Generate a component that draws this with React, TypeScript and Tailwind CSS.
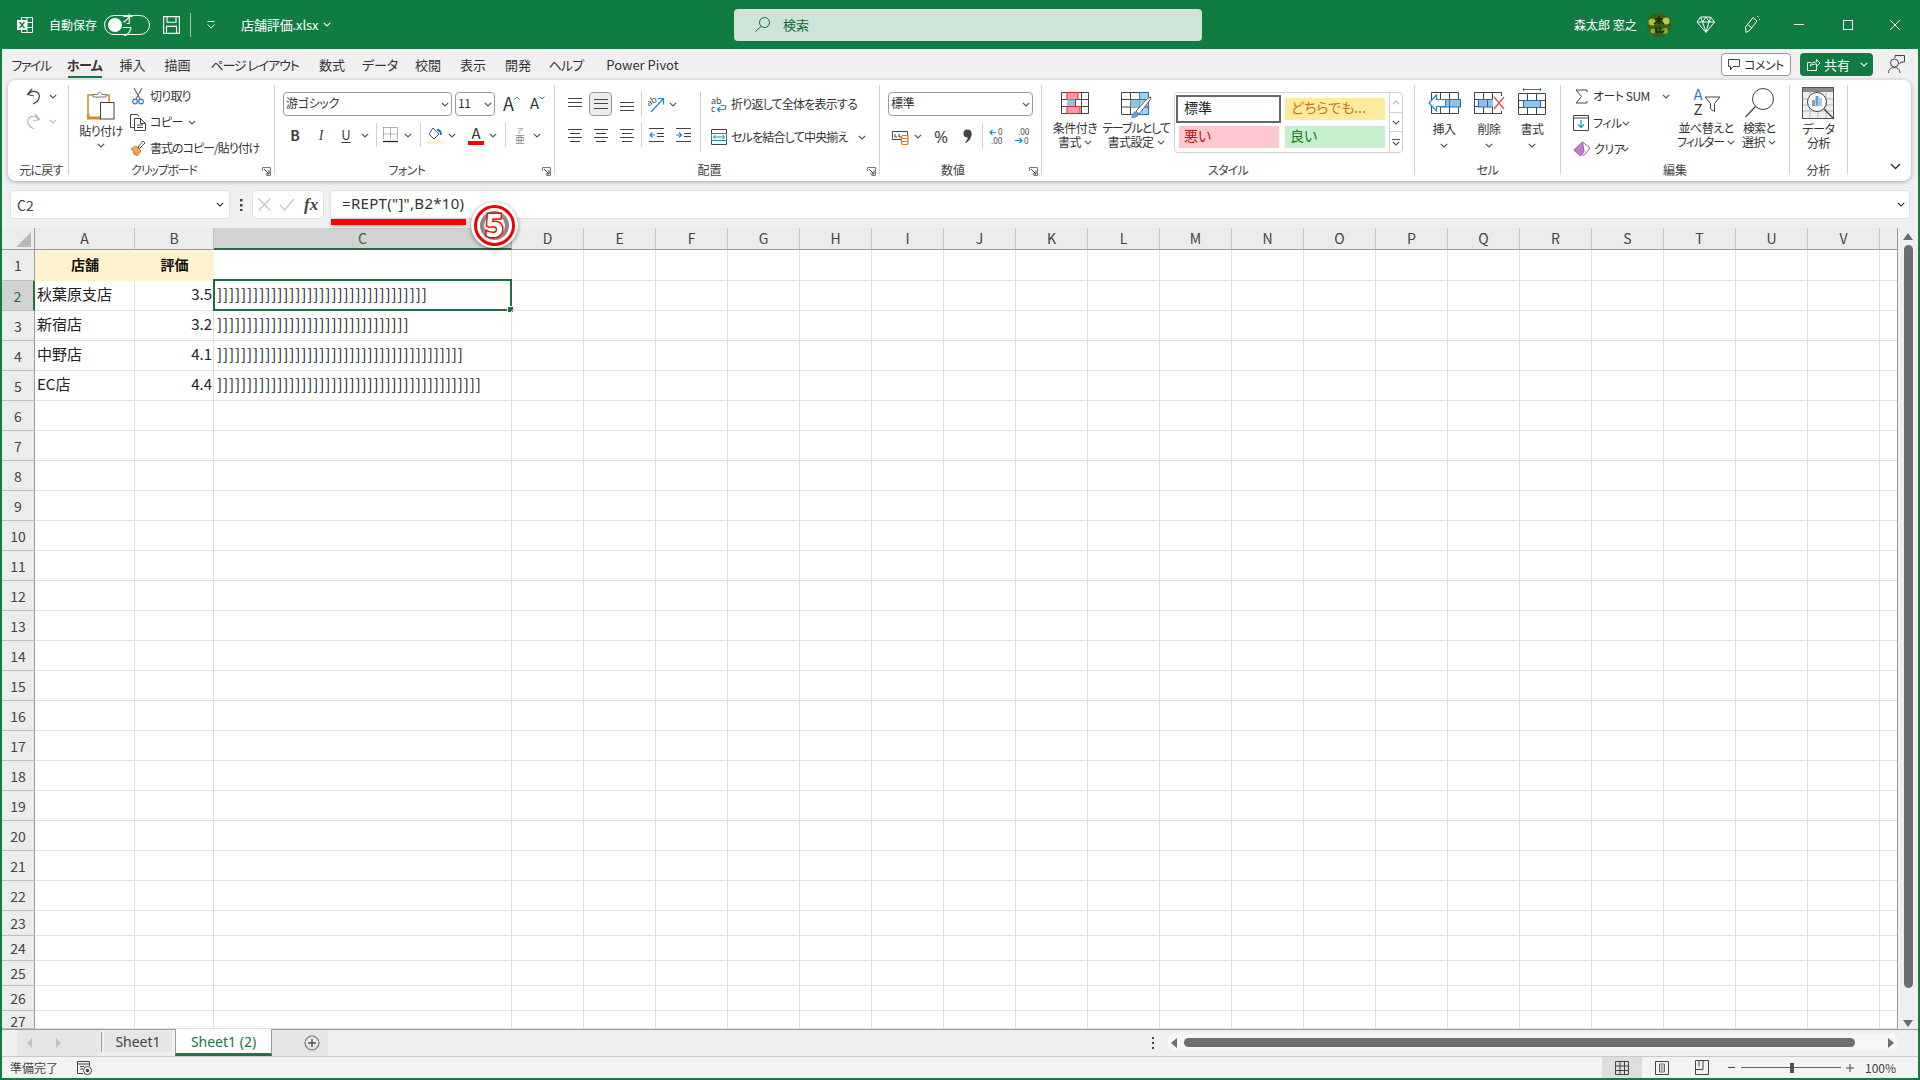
import React from "react";

const Chev = ({ c = "#555" }: { c?: string }) => (
  <svg width="8" height="5" viewBox="0 0 8 5" fill="none" className="block shrink-0"><path d="M.8.8 4 4 7.2.8" stroke={c} strokeWidth="1.2" /></svg>
);
const S = ({ w, h, children, className = "" }: { w: number; h: number; children: React.ReactNode; className?: string }) => (
  <svg width={w} height={h} viewBox={`0 0 ${w} ${h}`} fill="none" className={`block shrink-0 ${className}`}>{children}</svg>
);
const Sep = ({ className = "" }: { className?: string }) => <div className={`w-px h-[24px] bg-[#d0d0d0] shrink-0 ${className}`} />;
const T = ({ children, className = "" }: { children: React.ReactNode; className?: string }) => (
  <span className={`whitespace-nowrap text-[12px] text-[#333] ${className.includes("tracking") ? "" : "tracking-[-0.5px]"} ${className.includes("leading") ? "" : "leading-[16px]"} ${className}`}>{children}</span>
);

const Launcher = () => (
  <S w={9} h={9}><path d="M.5 4V.5h8v8H4.500" stroke="#777" /><path d="M2 2l5 5M7 3.500V7H3.500" stroke="#444" /></S>
);

function Group({ w, label, lblClass = "", launcher = false, children }: { w: string; label: string; lblClass?: string; launcher?: boolean; children: React.ReactNode }) {
  return (
    <div className={`${w} h-[90px] flex flex-col border-r border-[#d0d0d0] relative shrink-0`}>
      <div className="flex-1 min-h-0 flex">{children}</div>
      <div className={`h-[16px] -mb-[3px] text-center text-[12px] leading-[16px] text-[#444] whitespace-nowrap ${launcher ? "pr-[15px]" : ""} ${lblClass}`}>{label}</div>
      {launcher && <div className="absolute right-[3px] -bottom-[1px]"><Launcher /></div>}
    </div>
  );
}

const Lines = ({ ys, left = 0, w = 14, alt = false }: { ys: number[]; left?: number; w?: number; alt?: boolean }) => (
  <S w={14} h={14}>{ys.map((y, i) => <path key={i} d={`M${left + (alt && i % 2 ? 2 : 0)} ${y + .5}h${w - (alt && i % 2 ? 4 : 0)}`} stroke="#444" />)}</S>
);

const ExcelIcon = () => (
  <S w={16} h={16}>
    <path d="M4.500.5h11v15h-11z" stroke="#fff" /><path d="M10 .5v15M4.500 5.500h11M4.500 10.500h11" stroke="#fff" />
    <rect x="0" y="3" width="10" height="10" fill="#fff" /><path d="M2.500 5l5 6M7.500 5l-5 6" stroke="#107c41" strokeWidth="1.300" />
  </S>
);
const SaveIcon = () => (
  <S w={17} h={18}><path d="M.6.6h15.800v16.800H.6z" stroke="#fff" strokeWidth="1.100" /><path d="M4 .6v5.600h9V.6M3.500 17.400v-7h10v7" stroke="#fff" strokeWidth="1.100" /></S>
);
const Avatar = () => (
  <S w={24} h={24}>
    <circle cx="12" cy="12" r="12" fill="#3d5f14" /><circle cx="5" cy="9" r="3.500" fill="#a5c244" /><circle cx="19" cy="8" r="3.500" fill="#b6cf4a" /><circle cx="18" cy="18" r="3" fill="#8eaa3a" /><circle cx="6" cy="18" r="2.500" fill="#8eaa3a" />
    <path d="M8 6h8M12 3v8M7 11l4-3M17 11l-4-3M9 14v5h7l1-2M12 14l2 2" stroke="#14280a" strokeWidth="1.500" />
  </S>
);

const Undo = ({ c }: { c: string }) => (
  <S w={15} h={17}><path d="M6 1 1.500 6.500 8 8" stroke={c} strokeWidth="1.200" /><path d="M2 6.300C5 3 9 2.500 11.500 4.500 15 7.500 13.500 13 7 16" stroke={c} strokeWidth="1.200" /></S>
);
const Redo = ({ c }: { c: string }) => (
  <S w={15} h={17}><path d="M9 1l4.500 5.500L7 8" stroke={c} strokeWidth="1.200" /><path d="M13 6.300C10 3 6 2.500 3.500 4.500 0 7.500 1.500 13 8 16" stroke={c} strokeWidth="1.200" /></S>
);
const Paste = () => (
  <S w={28} h={30}>
    <path d="M1 5h21v23H1z" fill="#fff" stroke="#e08a1e" strokeWidth="1.600" /><path d="M1 24v4h13" stroke="#e08a1e" strokeWidth="3" />
    <path d="M6 7V4.500h4.500c0-3 4-3 4.500 0H19V7z" fill="#fff" stroke="#777" />
    <rect x="13.500" y="12.500" width="13.500" height="16.500" fill="#fff" stroke="#444" />
  </S>
);
const Cut = () => (
  <S w={12} h={17}><path d="M2 0l6 11M10 0L4 11" stroke="#666" strokeWidth="1.100" /><circle cx="3" cy="13.500" r="2.300" stroke="#2b7cd3" strokeWidth="1.200" /><circle cx="9" cy="13.500" r="2.300" stroke="#2b7cd3" strokeWidth="1.200" /></S>
);
const Copy = () => (
  <S w={16} h={17}><path d="M4 13.500H.5V.5h7L9 3" stroke="#444" /><path d="M4.500 4.500h6l5 5v7h-11z" fill="#fff" stroke="#444" /><path d="M10.500 4.500v5h5M7 11h6M7 13.500h6" stroke="#444" /></S>
);
const Painter = () => (
  <S w={16} h={16}><path d="M1 9l5-3 5 5-4 5c-1-1-1-2-1-2l-2 1 1-2-2-.5 1-1.500z" fill="#f2a65a" stroke="#d9761c" /><path d="M8 7l5-6 2 2-5.500 5.500z" fill="#fff" stroke="#555" /></S>
);
const Borders = () => (
  <S w={15} h={16}><path d="M.5.500h14M14.500.500v11M.5 .5v11M7.500.5v11M.5 7h14" stroke="#666" strokeDasharray="1 1" /><path d="M0 14.500h15" stroke="#222" strokeWidth="1.300" /></S>
);
const Fill = () => (
  <S w={17} h={17}><path d="M6 1l6 6-5 5-5-5z" fill="#fff" stroke="#555" /><path d="M10 3c3 0 4 2 4 5" stroke="#1a6fc0" strokeWidth="1.800" /><rect y="13.500" width="17" height="3.500" fill="#fff2cc" /></S>
);
const Orient = () => (
  <S w={17} h={17}>
    <text x="0" y="9" fontSize="9" fill="#444" transform="rotate(-30 3 9)" fontFamily="Noto Sans">ab</text>
    <path d="M3 16L15 3M9.500 2.500H15.500V8.500" stroke="#1e8bcd" strokeWidth="1.200" />
  </S>
);
const Indent = ({ dir }: { dir: number }) => (
  <S w={15} h={14}>
    <path d="M0 .5h15M0 13.500h15" stroke="#444" /><path d="M8 5.500h7M8 8.500h7" stroke="#444" />
    {dir < 0 ? <path d="M6 7H.8M3.500 4.500L1 7l2.500 2.500" stroke="#1e8bcd" strokeWidth="1.200" /> : <path d="M0 7h5.500M3 4.500L5.500 7 3 9.500" stroke="#1e8bcd" strokeWidth="1.200" />}
  </S>
);
const Wrap = () => (
  <S w={16} h={17}>
    <text x="0" y="8" fontSize="9" fill="#444" fontFamily="Noto Sans">ab</text><text x="0" y="16" fontSize="9" fill="#444" fontFamily="Noto Sans">c</text>
    <path d="M10 9.500h3.500c2 0 2 4-.5 4H7M9 11l-2.500 2.500L9 16" stroke="#1e8bcd" strokeWidth="1.200" />
  </S>
);
const Merge = () => (
  <S w={16} h={16}><path d="M.5.5h15v15H.5zM.5 4.500h15M.5 11.500h15" stroke="#444" /><path d="M.5 4.500h15v7H.5z" fill="#fff" stroke="#1e8bcd" /><path d="M2.500 8h11M4.500 6l-2 2 2 2M11.500 6l2 2-2 2" stroke="#1e8bcd" /></S>
);
const Accounting = () => (
  <S w={17} h={17}><path d="M.5 3.500h15v8H.5z" stroke="#444" /><path d="M3 6v3h2M7 6v3h2" stroke="#444" /><rect x="9.500" y="7.500" width="6.500" height="9" rx="1.500" fill="#fff" stroke="#e07a1e" strokeWidth="1.200" /><path d="M9.500 10.500h6.500M9.500 13.500h6.500" stroke="#e07a1e" /></S>
);
const Comma = () => (
  <S w={9} h={15}><circle cx="4.500" cy="4.500" r="4" fill="#444" /><path d="M8.500 4.500C8.500 9 6 13 1.500 14.500 4 11.500 5 9.500 5 7z" fill="#444" /></S>
);
const Dec = ({ inc }: { inc: boolean }) => (
  <S w={16} h={17}>
    {inc ? <>
      <path d="M7 4.500H1M3.500 2L1 4.500 3.500 7" stroke="#1e8bcd" strokeWidth="1.200" />
      <text x="9" y="7" fontSize="8" fill="#444" fontFamily="Noto Sans">0</text>
      <text x="2" y="16" fontSize="8" fill="#444" fontFamily="Noto Sans">.00</text>
    </> : <>
      <text x="3" y="7" fontSize="8" fill="#444" fontFamily="Noto Sans">.00</text>
      <path d="M0 12.500h7M4.500 10L7 12.500 4.500 15" stroke="#1e8bcd" strokeWidth="1.200" />
      <text x="9" y="16" fontSize="8" fill="#444" fontFamily="Noto Sans">0</text>
    </>}
  </S>
);
const Cond = () => (
  <S w={28} h={22}>
    <path d="M.5.5h27v21H.5zM.5 7.500h27M.5 14.500h27M6.500.5v21M14.500.5v21M20.500.5v21" stroke="#444" />
    <rect x="6" y="0.500" width="11" height="7" fill="#ff9ca8" stroke="#d92b2b" /><rect x="6" y="7.500" width="8" height="7" fill="#8fc3ea" /><rect x="6" y="14.500" width="13" height="7" fill="#ff9ca8" stroke="#d92b2b" />
  </S>
);
const TableIc = () => (
  <S w={31} h={27}>
    <path d="M.5.5h27v22H.5zM.5 7.500h27M.5 15h27M9.500.5v22M18.500.5v22" stroke="#444" />
    <rect x="9.500" y="7.500" width="9" height="7.500" fill="#8fc3ea" /><rect x="18.500" y=".5" width="9" height="22" fill="#8fc3ea" opacity=".8" /><path d="M18.500.5h9M18.500 7.500h9M18.500 15h9M18.500 22.500h9M27.500.5v22M9.500 7.500h9" stroke="#1e6fb8" />
    <path d="M15 19L27 6l3-1-1 3-11 14z" fill="#fff" stroke="#666" /><path d="M10 26c1-1 1-5 4-7l4 3c-1 4-5 4-8 4z" fill="#5a9bd5" />
  </S>
);
const GridIc = ({ x = 0, y = 0, w = 28, h = 22 }: { x?: number; y?: number; w?: number; h?: number }) => (
  <path d={`M${x + .5} ${y + .5}h${w - 1}v${h - 1}h-${w - 1}zM${x + .5} ${y + 7.5}h${w - 1}M${x + .5} ${y + 14.5}h${w - 1}M${x + 9.5} ${y + .5}v7M${x + 18.5} ${y + .5}v7M${x + 9.5} ${y + 14.500}v7M${x + 18.5} ${y + 14.500}v7`} stroke="#444" />
);
const InsertIc = () => (
  <S w={33} h={23}><GridIc x={3} y={0} /><rect x="12" y="7.500" width="20.500" height="7.500" fill="#8fc3ea" stroke="#1e6fb8" /><path d="M21.500 7.500V15" stroke="#1e6fb8" /><path d="M8.500 3L1 11l7.500 8v-4.500h9v-7h-9z" fill="#fff" stroke="#1e8bcd" strokeWidth="1.200" /></S>
);
const DeleteIc = () => (
  <S w={31} h={23}><GridIc x={0} y={0} /><rect x="4.500" y="7.500" width="17" height="7.500" fill="#8fc3ea" stroke="#1e6fb8" /><path d="M13.500 7.500V15" stroke="#1e6fb8" /><rect x="19" y="4" width="12" height="15" fill="#fff" /><path d="M20 5l10 12M30 5L20 17" stroke="#ea4c4c" strokeWidth="1.300" /></S>
);
const FormatIc = () => (
  <S w={28} h={27}><path d="M5 1.500h18M5.500 0v3M22.500 0v3" stroke="#1e78c8" /><GridIc x={0} y={5} /><rect x="5.500" y="12.500" width="17" height="7" fill="#8fc3ea" stroke="#1e6fb8" /></S>
);
const Sigma = () => (
  <S w={13} h={15}><path d="M12 3V1H1l5.500 6.500L1 14h11v-2" stroke="#444" /></S>
);
const FillDown = () => (
  <S w={16} h={16}><path d="M.5.5h15v15H.5z" stroke="#444" /><path d="M.5 3h15" stroke="#444" /><path d="M8 5v7.500M5 9.500l3 3 3-3" stroke="#1e8bcd" strokeWidth="1.200" /></S>
);
const Eraser = () => (
  <S w={18} h={16}><path d="M9.500 1L17 7l-6 7.500-2.500-2z" fill="#fff" stroke="#a855b5" /><path d="M9.500 1L1 9l6.500 6 3.500-4.500z" fill="#c27ed0" stroke="#a855b5" /></S>
);
const SortIc = () => (
  <div className="relative w-[29px] h-[27px]">
    <span className="absolute left-[2px] -top-[3px] text-[15px] leading-[14px] text-[#1e7fd0]">A</span>
    <span className="absolute left-[2px] top-[12px] text-[15px] leading-[14px] text-[#333]">Z</span>
    <div className="absolute left-[12px] top-[6px]"><S w={18} h={16}><path d="M.5.5h15L10 7v8l-4-2.500V7z" transform="translate(.5 .5)" stroke="#444" /></S></div>
  </div>
);
const Find = () => (
  <S w={30} h={30}><circle cx="18" cy="11" r="10.500" stroke="#444" /><path d="M10.500 18.500L.5 29" stroke="#444" strokeWidth="1.200" /></S>
);
const Analysis = () => (
  <S w={33} h={33}>
    <rect x=".5" y=".5" width="31" height="31" fill="#efefef" stroke="#555" /><rect x="1" y="1" width="30" height="4" fill="#8a8a8a" />
    <path d="M1 12h30M1 18h30M1 24h30M8 5v26M16 5v26M24 5v26" stroke="#bbb" />
    <circle cx="15" cy="15" r="9.500" fill="#fff" stroke="#444" /><rect x="10" y="13" width="3" height="6" fill="#999" /><rect x="13.500" y="9" width="3" height="10" fill="#5aa0dc" /><rect x="17" y="11" width="3" height="8" fill="#aac8e8" />
    <path d="M22 22l10 10" stroke="#444" strokeWidth="1.300" />
  </S>
);

const Combo = ({ w, children }: { w: string; children: React.ReactNode }) => (
  <div className={`${w} h-[24px] rounded-[4px] border border-[#9a9a9a] flex items-center pl-[2px] pr-[2px] justify-between bg-white shrink-0`}>
    <span className="text-[12px] leading-[16px] text-[#333] tracking-[-0.3px] -mt-[2px]">{children}</span><Chev />
  </div>
);

const tabs: [string, string, string][] = [
  ["ファイル", "w-[58px]", "tracking-[-1.5px]"], ["ホーム", "w-[49px]", "tracking-[-0.5px]"], ["挿入", "w-[47px]", ""], ["描画", "w-[43px]", ""], ["ページ レイアウト", "w-[111px]", "tracking-[-1.1px]"], ["数式", "w-[44px]", ""],
  ["データ", "w-[52px]", ""], ["校閲", "w-[44px]", ""], ["表示", "w-[46px]", ""], ["開発", "w-[44px]", ""], ["ヘルプ", "w-[52px]", "tracking-[-0.8px]"], ["Power Pivot", "w-[101px]", ""],
];

const cols: [string, string][] = [
  ["A", "w-[100px]"], ["B", "w-[79px]"], ["C", "w-[298px]"],
  ["D", "w-[72px]"], ["E", "w-[72px]"], ["F", "w-[72px]"], ["G", "w-[72px]"], ["H", "w-[72px]"], ["I", "w-[72px]"], ["J", "w-[72px]"], ["K", "w-[72px]"], ["L", "w-[72px]"],
  ["M", "w-[72px]"], ["N", "w-[72px]"], ["O", "w-[72px]"], ["P", "w-[72px]"], ["Q", "w-[72px]"], ["R", "w-[72px]"], ["S", "w-[72px]"], ["T", "w-[72px]"], ["U", "w-[72px]"], ["V", "w-[72px]"], ["", "w-[18px]"],
];
const rowH = (r: number) => (r === 1 ? "h-[31px]" : r <= 22 ? "h-[30px]" : r <= 26 ? "h-[25px]" : "h-[18px]");
const data: Record<number, [string, string, number]> = {
  2: ["秋葉原支店", "3.5", 35], 3: ["新宿店", "3.2", 32], 4: ["中野店", "4.1", 41], 5: ["EC店", "4.4", 44],
};

function Row({ r }: { r: number }) {
  const d = data[r];
  return (
    <div className={`flex ${rowH(r)} overflow-visible`}>
      <div className={`w-[33px] shrink-0 flex items-center justify-center text-[14px] border-b border-b-[#bdbdbd] ${r === 27 ? "pt-[3px]" : "pt-[1px]"} ${r === 2 ? "bg-[#d2d2d2] text-[#1f6e43] border-r-2 border-r-[#1f6e43]" : "bg-[#ececec] text-[#444] border-r border-r-[#9a9a9a]"}`}>{r}</div>
      {cols.map(([c, w], i) => {
        const base = `${w} shrink-0 border-r border-b border-[#e0e0e0] flex items-center pb-[3px] text-[15px] text-[#222] relative whitespace-nowrap`;
        if (r === 1 && i === 0) return <div key={c} className={`${w} shrink-0 bg-[#fff2cc] flex items-center justify-center pb-[2px] text-[14px] font-bold text-[#111]`}>店舗</div>;
        if (r === 1 && i === 1) return <div key={c} className={`${w} shrink-0 bg-[#fff2cc] flex items-center justify-center pb-[2px] text-[14px] font-bold text-[#111]`}>評価</div>;
        if (d && i === 0) return <div key={c} className={`${base} pl-[2px]`}>{d[0]}</div>;
        if (d && i === 1) return <div key={c} className={`${base} justify-end pr-[1px] text-[14px]`}>{d[1]}</div>;
        if (d && i === 2) return (
          <div key={c} className={`${base} pl-[3px] tracking-[0.95px] text-[#1c1c3c]`}>
            {"]".repeat(d[2])}
            {r === 2 && (
              <>
                <div className="absolute -left-[1px] -top-[2px] -right-[1px] -bottom-[1px] border-2 border-[#1f6e43]" />
                <div className="absolute -right-[3px] -bottom-[3px] w-[7px] h-[7px] bg-[#1f6e43] border border-white" />
              </>
            )}
          </div>
        );
        return <div key={c || "w"} className={base} />;
      })}
    </div>
  );
}

export default function App() {
  const rows = Array.from({ length: 27 }, (_, i) => i + 1);
  return (
    <div className="w-[1920px] h-[1080px] overflow-hidden flex flex-col bg-[#f0f0f0] [font-family:'Noto_Sans_CJK_JP','Noto_Sans',sans-serif] [font-feature-settings:'palt'] text-[#333]">
      {/* title bar */}
      <div className="h-[49px] shrink-0 bg-[#107c41] flex items-center text-white">
        <div className="w-[734px] shrink-0 flex items-center pl-[17px]">
          <ExcelIcon />
          <span className="ml-[16px] w-[48px] text-[12px] whitespace-nowrap">自動保存</span>
          <div className="ml-[7px] w-[46px] h-[20px] rounded-full border border-white flex items-center justify-between pl-[3px] pr-[6px] shrink-0">
            <div className="w-[14px] h-[14px] rounded-full bg-white" /><span className="text-[12px] leading-none">オフ</span>
          </div>
          <div className="ml-[13px]"><SaveIcon /></div>
          <div className="ml-[10px] w-px h-[24px] bg-[#9cc9ae]" />
          <div className="ml-[15px]"><S w={10} h={8}><path d="M1.500.5h7" stroke="#fff" /><path d="M1.500 3.500L5 7l3.500-3.500" stroke="#fff" /></S></div>
          <span className="ml-[25px] w-[81px] text-[13px] whitespace-nowrap tracking-[-0.1px]">店舗評価.xlsx</span>
          <div className="ml-[1px]"><Chev c="#fff" /></div>
        </div>
        <div className="w-[468px] h-[32px] shrink-0 bg-[#cfe3d8] rounded-[4px] flex items-center pl-[21px] text-[#0f6b3a]">
          <S w={15} h={15}><circle cx="9.500" cy="5.500" r="5" stroke="#0f6b3a" /><path d="M6 9.500L.5 14.500" stroke="#0f6b3a" /></S>
          <span className="ml-[13px] text-[13px]">検索</span>
        </div>
        <div className="flex-1 flex items-center pl-[372px]">
          <span className="w-[65px] text-[12px] whitespace-nowrap">森太郎 窓之</span>
          <div className="ml-[8px]"><Avatar /></div>
          <div className="ml-[25px]"><S w={19} h={17}><path d="M4.500 1h10l4 5-8.500 10.500L1 6z" stroke="#fff" /><path d="M1 6h17.500M6.500 6L10 16l3-10M4.500 1l2 5L10 1l3.500 5 1-5" stroke="#fff" /></S></div>
          <div className="ml-[29px]"><S w={16} h={19}><path d="M1.500 12L9 2.500l4 3.500-7 9-4 2.500z" stroke="#fff" /><path d="M4 10l4 3M13 1l1.500 1M15 4.500h1" stroke="#fff" /></S></div>
          <div className="ml-[34px] w-[10px] h-px bg-white" />
          <div className="ml-[39px] w-[10px] h-[10px] border border-white" />
          <div className="ml-[37px]"><S w={10} h={10}><path d="M0 0l10 10M10 0L0 10" stroke="#fff" /></S></div>
        </div>
      </div>

      <div className="flex-1 min-h-0 flex flex-col border-x-2 border-b-2 border-[#107c41]">
        {/* tabs */}
        <div className="h-[31px] shrink-0 flex items-center">
          {tabs.map(([t, w, tr]) => (
            <div key={t} className={`${w} ${tr} shrink-0 h-[31px] flex items-center justify-center relative text-[13px] text-[#333] whitespace-nowrap ${t === "ホーム" ? "font-bold" : ""}`}>
              {t}
              {t === "ホーム" && <div className="absolute bottom-[2px] left-[8px] right-[7px] h-[2px] bg-[#107c41]" />}
            </div>
          ))}
          <div className="ml-auto flex items-center pr-[13px]">
            <div className="w-[70px] h-[23px] rounded-[4px] border border-[#999] bg-white flex items-center justify-center gap-[4px]">
              <S w={12} h={12}><path d="M.5.5h11v7H5L2.500 11V7.500h-2z" stroke="#444" /></S><span className="text-[12px] tracking-[-0.5px]">コメント</span>
            </div>
            <div className="ml-[9px] w-[73px] h-[23px] rounded-[4px] bg-[#107c41] flex items-center text-white pl-[7px]">
              <S w={13} h={13}><path d="M9.500 8v4.500h-9v-8H4" stroke="#fff" /><path d="M3.500 8c0-3 2.500-4 6-4V1.500L13 5 9.500 8.500V6C7 6 5 6.500 3.500 8z" stroke="#fff" strokeWidth=".9" /></S>
              <span className="ml-[4px] text-[13px]">共有</span>
              <div className="ml-[10px]"><Chev c="#fff" /></div>
            </div>
            <div className="ml-[15px]"><S w={17} h={19}><circle cx="6.500" cy="8" r="4" stroke="#444" /><path d="M.5 18c0-4 3-5.500 6-5.500s5 1.500 5.500 5.500" stroke="#444" /><path d="M7 3V.5h9.500V7H13l-1.500 2" stroke="#444" /></S></div>
          </div>
        </div>

        {/* ribbon */}
        <div className="ml-[6px] mr-[7px] h-[101px] shrink-0 bg-white rounded-[8px] shadow-[0_1px_4px_rgba(0,0,0,0.3)] flex items-start pt-[5px]">
          <Group w="w-[61px]" label="元に戻す" lblClass="pl-[6px] tracking-[-0.7px]">
            <div className="pl-[18px] pt-[3px] flex flex-col">
              <div className="flex items-center gap-[8px]"><Undo c="#444" /><Chev /></div>
              <div className="flex items-center gap-[8px] mt-[8px]"><Redo c="#b5b5b5" /><Chev c="#bbb" /></div>
            </div>
          </Group>

          <Group w="w-[206px]" label="クリップボード" lblClass="tracking-[-1.2px]" launcher>
            <div className="ml-[7px] w-[50px] flex flex-col items-center pt-[5px]">
              <Paste />
              <T className="mt-[3px]">貼り付け</T>
              <div className="mt-[4px]"><Chev /></div>
            </div>
            <div className="ml-[4px] flex flex-col gap-[4px]">
              <div className="h-[22px] flex items-center"><div className="w-[16px] flex justify-center"><Cut /></div><T className="ml-[4px] tracking-[-0.8px]">切り取り</T></div>
              <div className="h-[22px] flex items-center"><Copy /><T className="ml-[4px] w-[26px]">コピー</T><div className="ml-[12px]"><Chev /></div></div>
              <div className="h-[22px] flex items-center"><Painter /><T className="ml-[4px] tracking-[-1px]">書式のコピー/貼り付け</T></div>
            </div>
          </Group>

          <Group w="w-[280px]" label="フォント" lblClass="tracking-[-0.5px]" launcher>
            <div className="pl-[8px] pt-[7px] flex flex-col">
              <div className="flex items-center h-[24px]">
                <Combo w="w-[169px]">游ゴシック</Combo>
                <div className="ml-[3px]"><Combo w="w-[40px]">11</Combo></div>
                <div className="ml-[8px] w-[17px] flex items-start text-[#333] -mt-[3px]"><span className="text-[18px] leading-[20px]">A</span><S w={6} h={4} className="mt-[3px]"><path d="M.5 3.500L3 1l2.500 2.500" stroke="#1e8bcd" /></S></div>
                <div className="ml-[10px] w-[15px] flex items-start text-[#333] -mt-[3px]"><span className="text-[15px] leading-[20px]">A</span><S w={6} h={4} className="mt-[3px]"><path d="M.5.5L3 3l2.500-2.500" stroke="#1e8bcd" /></S></div>
              </div>
              <div className="flex items-center h-[24px] mt-[7px]">
                <div className="w-[24px] text-center text-[14px] font-bold text-[#444]">B</div>
                <div className="w-[28px] text-center text-[14px] italic text-[#444] [font-family:'Liberation_Serif',serif]">I</div>
                <div className="w-[22px] text-center text-[13px] text-[#444] underline underline-offset-2">U</div>
                <div className="w-[16px] flex justify-center"><Chev /></div>
                <Sep className="ml-[3px]" />
                <div className="w-[27px] flex justify-center"><Borders /></div>
                <div className="w-[10px]"><Chev /></div>
                <Sep className="ml-[6px]" />
                <div className="ml-[6px]"><Fill /></div>
                <div className="ml-[4px] w-[10px]"><Chev /></div>
                <div className="ml-[10px] w-[16px] flex flex-col items-center h-[20px]">
                  <span className="text-[15px] leading-[15px] text-[#333]">A</span><div className="w-[16px] h-[4px] bg-[#ff0000] mt-[1px]" />
                </div>
                <div className="ml-[5px] w-[10px]"><Chev /></div>
                <Sep className="ml-[6px]" />
                <div className="ml-[7px] w-[14px] flex flex-col items-center text-[#888] leading-none"><span className="text-[7px] leading-[8px]">ア</span><span className="text-[10px] leading-[10px]">亜</span></div>
                <div className="ml-[6px] w-[10px]"><Chev /></div>
              </div>
            </div>
          </Group>

          <Group w="w-[325px]" label="配置" launcher>
            <div className="w-[145px] pt-[7px] flex flex-col pl-[13px] shrink-0">
              <div className="flex items-center h-[24px]">
                <Lines ys={[1, 5, 9]} />
                <div className="ml-[7px] w-[23px] h-[24px] rounded-[4px] bg-[#ececec] border border-[#999] flex items-center justify-center"><Lines ys={[2, 6, 11]} /></div>
                <div className="ml-[8px] mt-[7px]"><Lines ys={[1, 5, 9]} /></div>
                <Sep className="ml-[7px]" />
                <div className="ml-[6px]"><Orient /></div>
                <div className="ml-[4px]"><Chev /></div>
              </div>
              <div className="flex items-center h-[24px] mt-[7px]">
                <Lines ys={[1, 5, 9, 13]} w={14} alt />
                <div className="ml-[12px]"><Lines ys={[1, 5, 9, 13]} left={0} w={14} alt /></div>
                <div className="ml-[12px]"><Lines ys={[1, 5, 9, 13]} w={14} alt /></div>
                <Sep className="ml-[7px]" />
                <div className="ml-[7px]"><Indent dir={-1} /></div>
                <div className="ml-[12px]"><Indent dir={1} /></div>
              </div>
            </div>
            <div className="mt-[7px] w-px h-[60px] bg-[#d0d0d0] shrink-0" />
            <div className="pl-[10px] pt-[7px] flex flex-col">
              <div className="h-[24px] flex items-center"><Wrap /><T className="ml-[4px] tracking-[-0.8px]">折り返して全体を表示する</T></div>
              <div className="h-[24px] mt-[9px] flex items-center"><Merge /><T className="ml-[4px] w-[116px] tracking-[-0.8px]">セルを結合して中央揃え</T><div className="ml-[11px]"><Chev /></div></div>
            </div>
          </Group>

          <Group w="w-[162px]" label="数値" launcher>
            <div className="pl-[8px] pt-[7px] flex flex-col">
              <Combo w="w-[145px]">標準</Combo>
              <div className="h-[24px] mt-[8px] flex items-center pl-[4px]">
                <Accounting />
                <div className="ml-[5px] w-[10px]"><Chev /></div>
                <span className="ml-[10px] w-[15px] text-[17px] leading-none text-[#444] [font-family:'Noto_Sans',sans-serif]">%</span>
                <div className="ml-[14px] w-[12px]"><Comma /></div>
                <Sep className="ml-[7px]" />
                <div className="ml-[6px]"><Dec inc /></div>
                <div className="ml-[10px]"><Dec inc={false} /></div>
              </div>
            </div>
          </Group>

          <Group w="w-[373px]" label="スタイル" lblClass="tracking-[-0.7px]">
            <div className="ml-[3px] w-[60px] pt-[7px] flex flex-col items-center shrink-0">
              <div className="h-[26px]"><Cond /></div>
              <div className="mt-[3px] flex flex-col items-center">
                <T className="leading-[14px]">条件付き</T>
                <div className="flex items-center gap-[3px]"><T className="leading-[14px]">書式</T><Chev /></div>
              </div>
            </div>
            <div className="w-[62px] pt-[7px] flex flex-col items-center shrink-0">
              <div className="h-[26px]"><TableIc /></div>
              <div className="mt-[3px] flex flex-col items-center">
                <T className="leading-[14px] tracking-[-1.1px]">テーブルとして</T>
                <div className="flex items-center gap-[3px]"><T className="leading-[14px]">書式設定</T><Chev /></div>
              </div>
            </div>
            <div className="ml-[7px] mt-[7px] w-[229px] h-[61px] border border-[#d0d0d0] rounded-[4px] flex shrink-0">
              <div className="w-[214px] pt-[2px] pl-px shrink-0">
                <div className="flex items-center h-[28px]">
                  <div className="w-[105px] h-[28px] border-2 border-[#666] bg-white flex items-center pl-[6px] pb-[3px] text-[14px] text-[#222]">標準</div>
                  <div className="ml-[4px] w-[100px] h-[22px] bg-[#ffeb9c] flex items-center pl-[6px] pb-[3px] text-[14px] text-[#c07a10] whitespace-nowrap">どちらでも...</div>
                </div>
                <div className="flex items-center h-[22px] mt-[3px]">
                  <div className="ml-[3px] w-[100px] h-[22px] bg-[#ffc7ce] flex items-center pl-[5px] pb-[3px] text-[14px] text-[#b51520]">悪い</div>
                  <div className="ml-[6px] w-[100px] h-[22px] bg-[#c6efce] flex items-center pl-[5px] pb-[3px] text-[14px] text-[#1a7a1a]">良い</div>
                </div>
              </div>
              <div className="flex-1 border-l border-[#d0d0d0] flex flex-col">
                <div className="h-[20px] flex items-center justify-center border-b border-[#d0d0d0]"><S w={8} h={5}><path d="M.8 4.200L4 1l3.200 3.200" stroke="#bbb" strokeWidth="1.200" /></S></div>
                <div className="h-[19px] flex items-center justify-center border-b border-[#d0d0d0]"><Chev /></div>
                <div className="flex-1 flex flex-col items-center justify-center gap-[1px]"><div className="w-[8px] h-px bg-[#555]" /><Chev /></div>
              </div>
            </div>
          </Group>

          <Group w="w-[146px]" label="セル" lblClass="tracking-[-0.5px]">
            <div className="ml-[6px] w-[46px] pt-[7px] flex flex-col items-center shrink-0">
              <div className="h-[26px]"><InsertIc /></div><T className="mt-[3px]">挿入</T><div className="mt-[6px]"><Chev /></div>
            </div>
            <div className="w-[44px] pt-[7px] flex flex-col items-center shrink-0">
              <div className="h-[26px]"><DeleteIc /></div><T className="mt-[3px]">削除</T><div className="mt-[6px]"><Chev /></div>
            </div>
            <div className="w-[42px] pt-[3px] flex flex-col items-center shrink-0">
              <div className="h-[29px]"><FormatIc /></div><T className="mt-[4px]">書式</T><div className="mt-[6px]"><Chev /></div>
            </div>
          </Group>

          <Group w="w-[229px]" label="編集">
            <div className="ml-[12px] w-[102px] flex flex-col gap-[4px] shrink-0">
              <div className="h-[22px] flex items-center"><div className="w-[16px] flex justify-center"><Sigma /></div><T className="ml-[4px] w-[58px]">オート SUM</T><div className="ml-[11px]"><Chev /></div></div>
              <div className="h-[22px] flex items-center mt-[1px]"><FillDown /><T className="ml-[4px] w-[25px]">フィル</T><div className="ml-[4px]"><Chev /></div></div>
              <div className="h-[22px] flex items-center"><Eraser /><T className="ml-[3px] w-[24px]">クリア</T><div className="ml-[3px]"><Chev /></div></div>
            </div>
            <div className="w-[62px] pt-[5px] flex flex-col items-center shrink-0">
              <div className="h-[28px]"><SortIc /></div>
              <div className="mt-[3px] flex flex-col items-center">
                <T className="leading-[14px]">並べ替えと</T>
                <div className="flex items-center gap-[3px]"><T className="leading-[14px] tracking-[-1.1px]">フィルター</T><Chev /></div>
              </div>
            </div>
            <div className="w-[44px] pt-[3px] flex flex-col items-center shrink-0">
              <div className="h-[30px] ml-[2px]"><Find /></div>
              <div className="mt-[3px] flex flex-col items-center">
                <T className="leading-[14px] tracking-[-0.8px]">検索と</T>
                <div className="flex items-center gap-[3px]"><T className="leading-[14px]">選択</T><Chev /></div>
              </div>
            </div>
          </Group>

          <Group w="w-[58px]" label="分析">
            <div className="w-full pt-[2px] flex flex-col items-center">
              <div className="h-[33px]"><Analysis /></div>
              <div className="mt-[2px] flex flex-col items-center">
                <T className="leading-[14px]">データ</T><T className="leading-[14px]">分析</T>
              </div>
            </div>
          </Group>
          <div className="flex-1 h-[96px] flex items-end justify-end pr-[10px] pb-[11px]">
            <S w={11} h={7}><path d="M1 1l4.500 4.500L10 1" stroke="#333" strokeWidth="1.400" /></S>
          </div>
        </div>

        {/* formula bar */}
        <div className="h-[47px] shrink-0 flex pt-[9px] relative">
          <div className="ml-[8px] w-[220px] h-[29px] rounded-[4px] bg-white border border-[#e0e0e0] flex items-center justify-between pl-[6px] pr-[5px] text-[14px] text-[#444] shrink-0">
            <span className="pt-[2px]">C2</span><Chev c="#333" />
          </div>
          <div className="w-[22px] h-[29px] flex items-center justify-center shrink-0"><S w={3} h={12}><rect width="2.500" height="2.500" y="0" fill="#444" /><rect width="2.500" height="2.500" y="5" fill="#444" /><rect width="2.500" height="2.500" y="10" fill="#444" /></S></div>
          <div className="w-[72px] h-[29px] rounded-[4px] bg-white border border-[#e0e0e0] flex items-center pl-[5px] shrink-0">
            <S w={13} h={13}><path d="M.5.5l12 12M12.500.5l-12 12" stroke="#c4c4c4" strokeWidth="1.200" /></S>
            <div className="ml-[8px]"><S w={16} h={13}><path d="M1 7l4.500 5L15 1" stroke="#c4c4c4" strokeWidth="1.200" /></S></div>
            <span className="ml-[9px] text-[17px] italic font-bold text-[#444] [font-family:'Liberation_Serif',serif]">fx</span>
          </div>
          <div className="ml-[6px] flex-1 mr-[8px] h-[29px] rounded-[4px] bg-white border border-[#e0e0e0] flex items-center justify-between pl-[11px] pr-[4px] text-[#333]">
            <span className="[font-family:'Noto_Sans',sans-serif] text-[15px] tracking-[0.3px] -mt-[2px]">=REPT("]",B2*10)</span><Chev c="#333" />
          </div>
          {/* annotation */}
          <div className="absolute left-[329px] top-[38px] w-[135px] h-[6px] bg-[#ff0000] shadow-[0_1px_4px_rgba(0,0,0,0.3)] z-20" />
          <div className="absolute left-[469px] top-[21px] w-[47px] h-[46px] rounded-full bg-white shadow-[0_1px_4px_rgba(0,0,0,0.45)] flex items-center justify-center z-20">
            <div className="w-[41px] h-[41px] rounded-full border-[3px] border-[#f00000] bg-white flex items-center justify-center">
              <svg width="33" height="33" viewBox="0 0 33 33" className="block">
                <circle cx="16.500" cy="16.500" r="12.500" fill="none" stroke="#8a8a8a" strokeWidth="4" />
                <text x="16.500" y="27.500" textAnchor="middle" fontSize="32" fontWeight="700" fill="#fff" stroke="#f00000" strokeWidth="3" paintOrder="stroke" fontFamily="Noto Sans">5</text>
              </svg>
            </div>
          </div>
        </div>

        {/* sheet */}
        <div className="flex-1 min-h-0 flex overflow-hidden">
          <div className="w-[1896px] shrink-0 flex flex-col overflow-hidden bg-white border-r border-[#9a9a9a]">
            <div className="h-[22px] flex shrink-0">
              <div className="w-[33px] h-[22px] shrink-0 bg-[#ececec] border-r border-b border-[#9a9a9a] flex items-end justify-end pr-[3px] pb-[2px]">
                <S w={15} h={15}><path d="M15 0v15H0z" fill="#b8b8b8" /></S>
              </div>
              {cols.map(([c, w]) => (
                <div key={c || "x"} className={`${w} shrink-0 h-[22px] flex items-center justify-center text-[14px] border-r ${c === "C" ? "bg-[#d2d2d2] text-[#1f6e43] border-b-2 border-b-[#1f6e43] border-r-[#b5b5b5]" : "bg-[#ececec] text-[#444] border-b border-b-[#9a9a9a] border-r-[#c4c4c4]"}`}>{c}</div>
              ))}
            </div>
            {rows.map((r) => <Row key={r} r={r} />)}
          </div>
          <div className="flex-1 flex flex-col items-center bg-[#f0f0f0]">
            <S w={10} h={7} className="mt-[5px]"><path d="M5 0l5 7H0z" fill="#6e6e6e" /></S>
            <div className="mt-[5px] w-[9px] h-[743px] rounded-full bg-[#6e6e6e]" />
            <S w={10} h={7} className="mt-auto mb-[2px]"><path d="M5 7L0 0h10z" fill="#6e6e6e" /></S>
          </div>
        </div>

        {/* sheet tabs */}
        <div className="h-[28px] shrink-0 flex border-t border-[#9a9a9a] border-b border-b-[#c8c8c8] bg-[#f0f0f0]">
          <div className="ml-[15px] w-[83px] h-[26px] bg-[#e6e6e6] flex items-center pl-[10px] shrink-0">
            <S w={5} h={10}><path d="M5 0v10L0 5z" fill="#c0c0c0" /></S>
            <div className="ml-[24px]"><S w={5} h={10}><path d="M0 0v10l5-5z" fill="#c0c0c0" /></S></div>
          </div>
          <div className="w-px h-[20px] bg-[#999] mt-[2px] ml-[1px] shrink-0" />
          <div className="ml-[2px] mt-[1px] w-[68px] h-[21px] bg-[#e6e6e6] flex items-center justify-center text-[14px] text-[#444] shrink-0 [font-family:'Noto_Sans',sans-serif]">Sheet1</div>
          <div className="ml-[3px] -mt-[1px] w-[97px] h-[27px] bg-white border-x border-[#9a9a9a] border-b-[3px] border-b-[#217346] flex items-center justify-center text-[14px] text-[#217346] shrink-0 [font-family:'Noto_Sans',sans-serif]">Sheet1 (2)</div>
          <div className="w-[56px] h-[26px] bg-[#e6e6e6] flex items-center pl-[32px] shrink-0">
            <S w={16} h={16}><circle cx="8" cy="8" r="7" stroke="#777" strokeWidth="1.200" /><path d="M8 4v8M4 8h8" stroke="#555" strokeWidth="1.500" /></S>
          </div>
          <div className="ml-[824px] w-[4px] h-[26px] flex items-center shrink-0"><S w={2} h={12}><rect width="2" height="2" y="0" fill="#444" /><rect width="2" height="2" y="5" fill="#444" /><rect width="2" height="2" y="10" fill="#444" /></S></div>
          <div className="ml-[11px] mt-[4px] w-[732px] h-[17px] rounded-full bg-[#f6f6f6] flex items-center pl-[4px] pr-[5px] shrink-0">
            <S w={6} h={10}><path d="M6 0v10L0 5z" fill="#6e6e6e" /></S>
            <div className="ml-[7px] w-[671px] h-[9px] rounded-full bg-[#6e6e6e]" />
            <div className="ml-auto"><S w={6} h={10}><path d="M0 0v10l6-5z" fill="#6e6e6e" /></S></div>
          </div>
        </div>

        {/* status */}
        <div className="h-[21px] shrink-0 bg-[#f3f3f3] flex items-center pl-[8px] text-[12px] text-[#444]">
          <span className="w-[48px] whitespace-nowrap">準備完了</span>
          <div className="ml-[19px]"><S w={15} h={14}><path d="M.5.5h12V5M.5.5v12H6M.5 3h12M3 5.500h4M3 8h3" stroke="#444" /><circle cx="10.500" cy="9.500" r="4" fill="#fff" stroke="#444" /><circle cx="10.500" cy="9.500" r="1.800" fill="#444" /></S></div>
          <div className="ml-[1510px] w-[40px] h-[21px] bg-[#dedede] flex items-center justify-center shrink-0">
            <S w={14} h={14}><path d="M.5.5h13v13H.5zM.5 5h13M.5 9.500h13M5 .5v13M9.500.5v13" stroke="#444" /></S>
          </div>
          <div className="ml-[13px]"><S w={14} h={14}><path d="M.5.5h13v13H.5z" stroke="#444" /><path d="M4.500 3h5v8h-5zM5.500 5h3M5.500 7h3M5.500 9h3" stroke="#444" strokeWidth=".8" /></S></div>
          <div className="ml-[26px]"><S w={14} h={15}><path d="M.5.5h13v14H.5zM.5 9.500h7.500V.5M4 .5v6" stroke="#444" /></S></div>
          <div className="ml-[19px] w-[7px] h-[1.500px] bg-[#444]" />
          <div className="ml-[6px] w-[100px] h-[10px] relative shrink-0 flex items-center">
            <div className="w-full h-px bg-[#666]" />
            <div className="absolute left-[49px] top-0 w-[4px] h-[10px] bg-[#555]" />
          </div>
          <div className="ml-[5px]"><S w={8} h={8}><path d="M0 4h8M4 0v8" stroke="#444" /></S></div>
          <span className="ml-[11px] text-[12px]">100%</span>
        </div>
      </div>
    </div>
  );
}
